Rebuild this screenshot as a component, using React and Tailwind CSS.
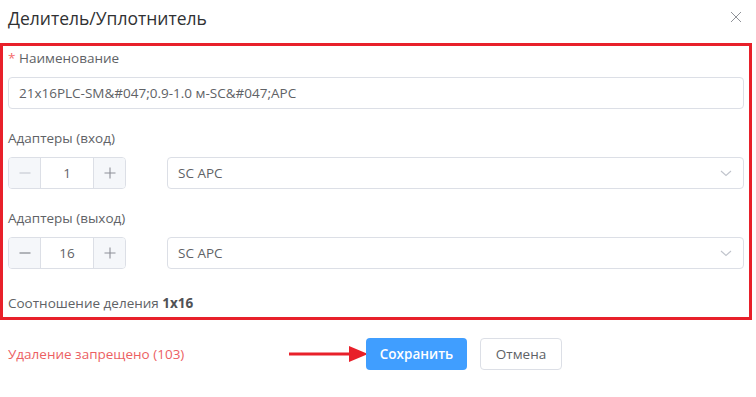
// App.jsx — splitter/compressor edit dialog with annotation frame

const font = { fontFamily: '"Open Sans", "Noto Sans", sans-serif' }

function Chevron() {
  return (
    <svg width="14" height="14" viewBox="0 0 14 14" fill="none" stroke="#c0c4cc" strokeWidth="1.1">
      <path d="M2 5l5 4.5L12 5" />
    </svg>
  )
}

function Stepper({ value, minDisabled }) {
  return (
    <div className="flex h-[32px] w-[118px] shrink-0 overflow-hidden rounded-[4px] border border-[#dcdfe6] bg-white">
      <div className="flex w-[32px] items-center justify-center border-r border-[#dcdfe6] bg-[#f5f7fa]">
        <svg width="14" height="14" viewBox="0 0 14 14" stroke={minDisabled ? '#c0c4cc' : '#6f7278'} strokeWidth="1.2">
          <path d="M1.5 7h11" />
        </svg>
      </div>
      <div className="flex flex-1 items-center justify-center text-[13.5px] text-[#606266]">{value}</div>
      <div className="flex w-[32px] items-center justify-center border-l border-[#dcdfe6] bg-[#f5f7fa]">
        <svg width="14" height="14" viewBox="0 0 14 14" stroke="#8d9097" strokeWidth="1.1">
          <path d="M1.5 7h11M7 1.5v11" />
        </svg>
      </div>
    </div>
  )
}

function AdapterRow({ label, value, minDisabled }) {
  return (
    <div className="mt-[19px]">
      <div className="text-[13.5px] leading-[20px] text-[#606266]">{label}</div>
      <div className="mt-[9px] flex gap-[41px]">
        <Stepper value={value} minDisabled={minDisabled} />
        <div className="flex h-[32px] flex-1 items-center justify-between rounded-[4px] border border-[#dcdfe6] bg-white pl-[10px] pr-[10px]">
          <span className="text-[13.5px] text-[#606266]">SC APC</span>
          <Chevron />
        </div>
      </div>
    </div>
  )
}

export default function App() {
  return (
    <div className="h-[397px] w-[756px] bg-white" style={font}>
      <div className="flex h-[43px] items-start justify-between pl-[8px] pr-[14px] pt-[5px]">
        <div className="text-[17.5px] leading-[26px] text-[#303133]">Делитель/Уплотнитель</div>
        <svg width="12" height="12" viewBox="0 0 12 12" stroke="#909399" strokeWidth="1" className="mt-[6px]">
          <path d="M1 1l10 10M11 1L1 11" />
        </svg>
      </div>

      <div className="w-[752px] border-[3px] border-[#e8202a] pb-[4px] pl-[5px] pr-[5px] pt-[2px]">
        <div className="text-[13.5px] leading-[20px] text-[#606266]">
          <span className="text-[#f56c6c]">*</span> Наименование
        </div>
        <div className="mt-[9px] flex h-[32px] items-center rounded-[4px] border border-[#dcdfe6] px-[10px] text-[13.5px] text-[#606266]">
          21x16PLC-SM&amp;#047;0.9-1.0 м-SC&amp;#047;APC
        </div>

        <AdapterRow label="Адаптеры (вход)" value="1" minDisabled />
        <AdapterRow label="Адаптеры (выход)" value="16" />

        <div className="mt-[24px] text-[13.5px] leading-[20px] text-[#606266]">
          Соотношение деления <b className="font-bold text-[#505256]">1x16</b>
        </div>
      </div>

      <div className="mt-[18px] flex items-center pl-[8px]">
        <div className="w-[281px] shrink-0 text-[13.5px] text-[#ec5f63]">Удаление запрещено (103)</div>
        <svg width="79" height="20" viewBox="0 0 79 20" className="shrink-0">
          <path d="M0 10h62" stroke="#e8202a" strokeWidth="3" />
          <path d="M60 2L79 10L60 18z" fill="#e8202a" />
        </svg>
        <button className="ml-[-2px] h-[32px] w-[101px] rounded-[4px] bg-[#409eff] text-[13.5px] font-semibold text-white">
          Сохранить
        </button>
        <button className="ml-[13px] h-[32px] w-[82px] rounded-[4px] border border-[#dcdfe6] bg-white text-[13.5px] text-[#606266]">
          Отмена
        </button>
      </div>
    </div>
  )
}
